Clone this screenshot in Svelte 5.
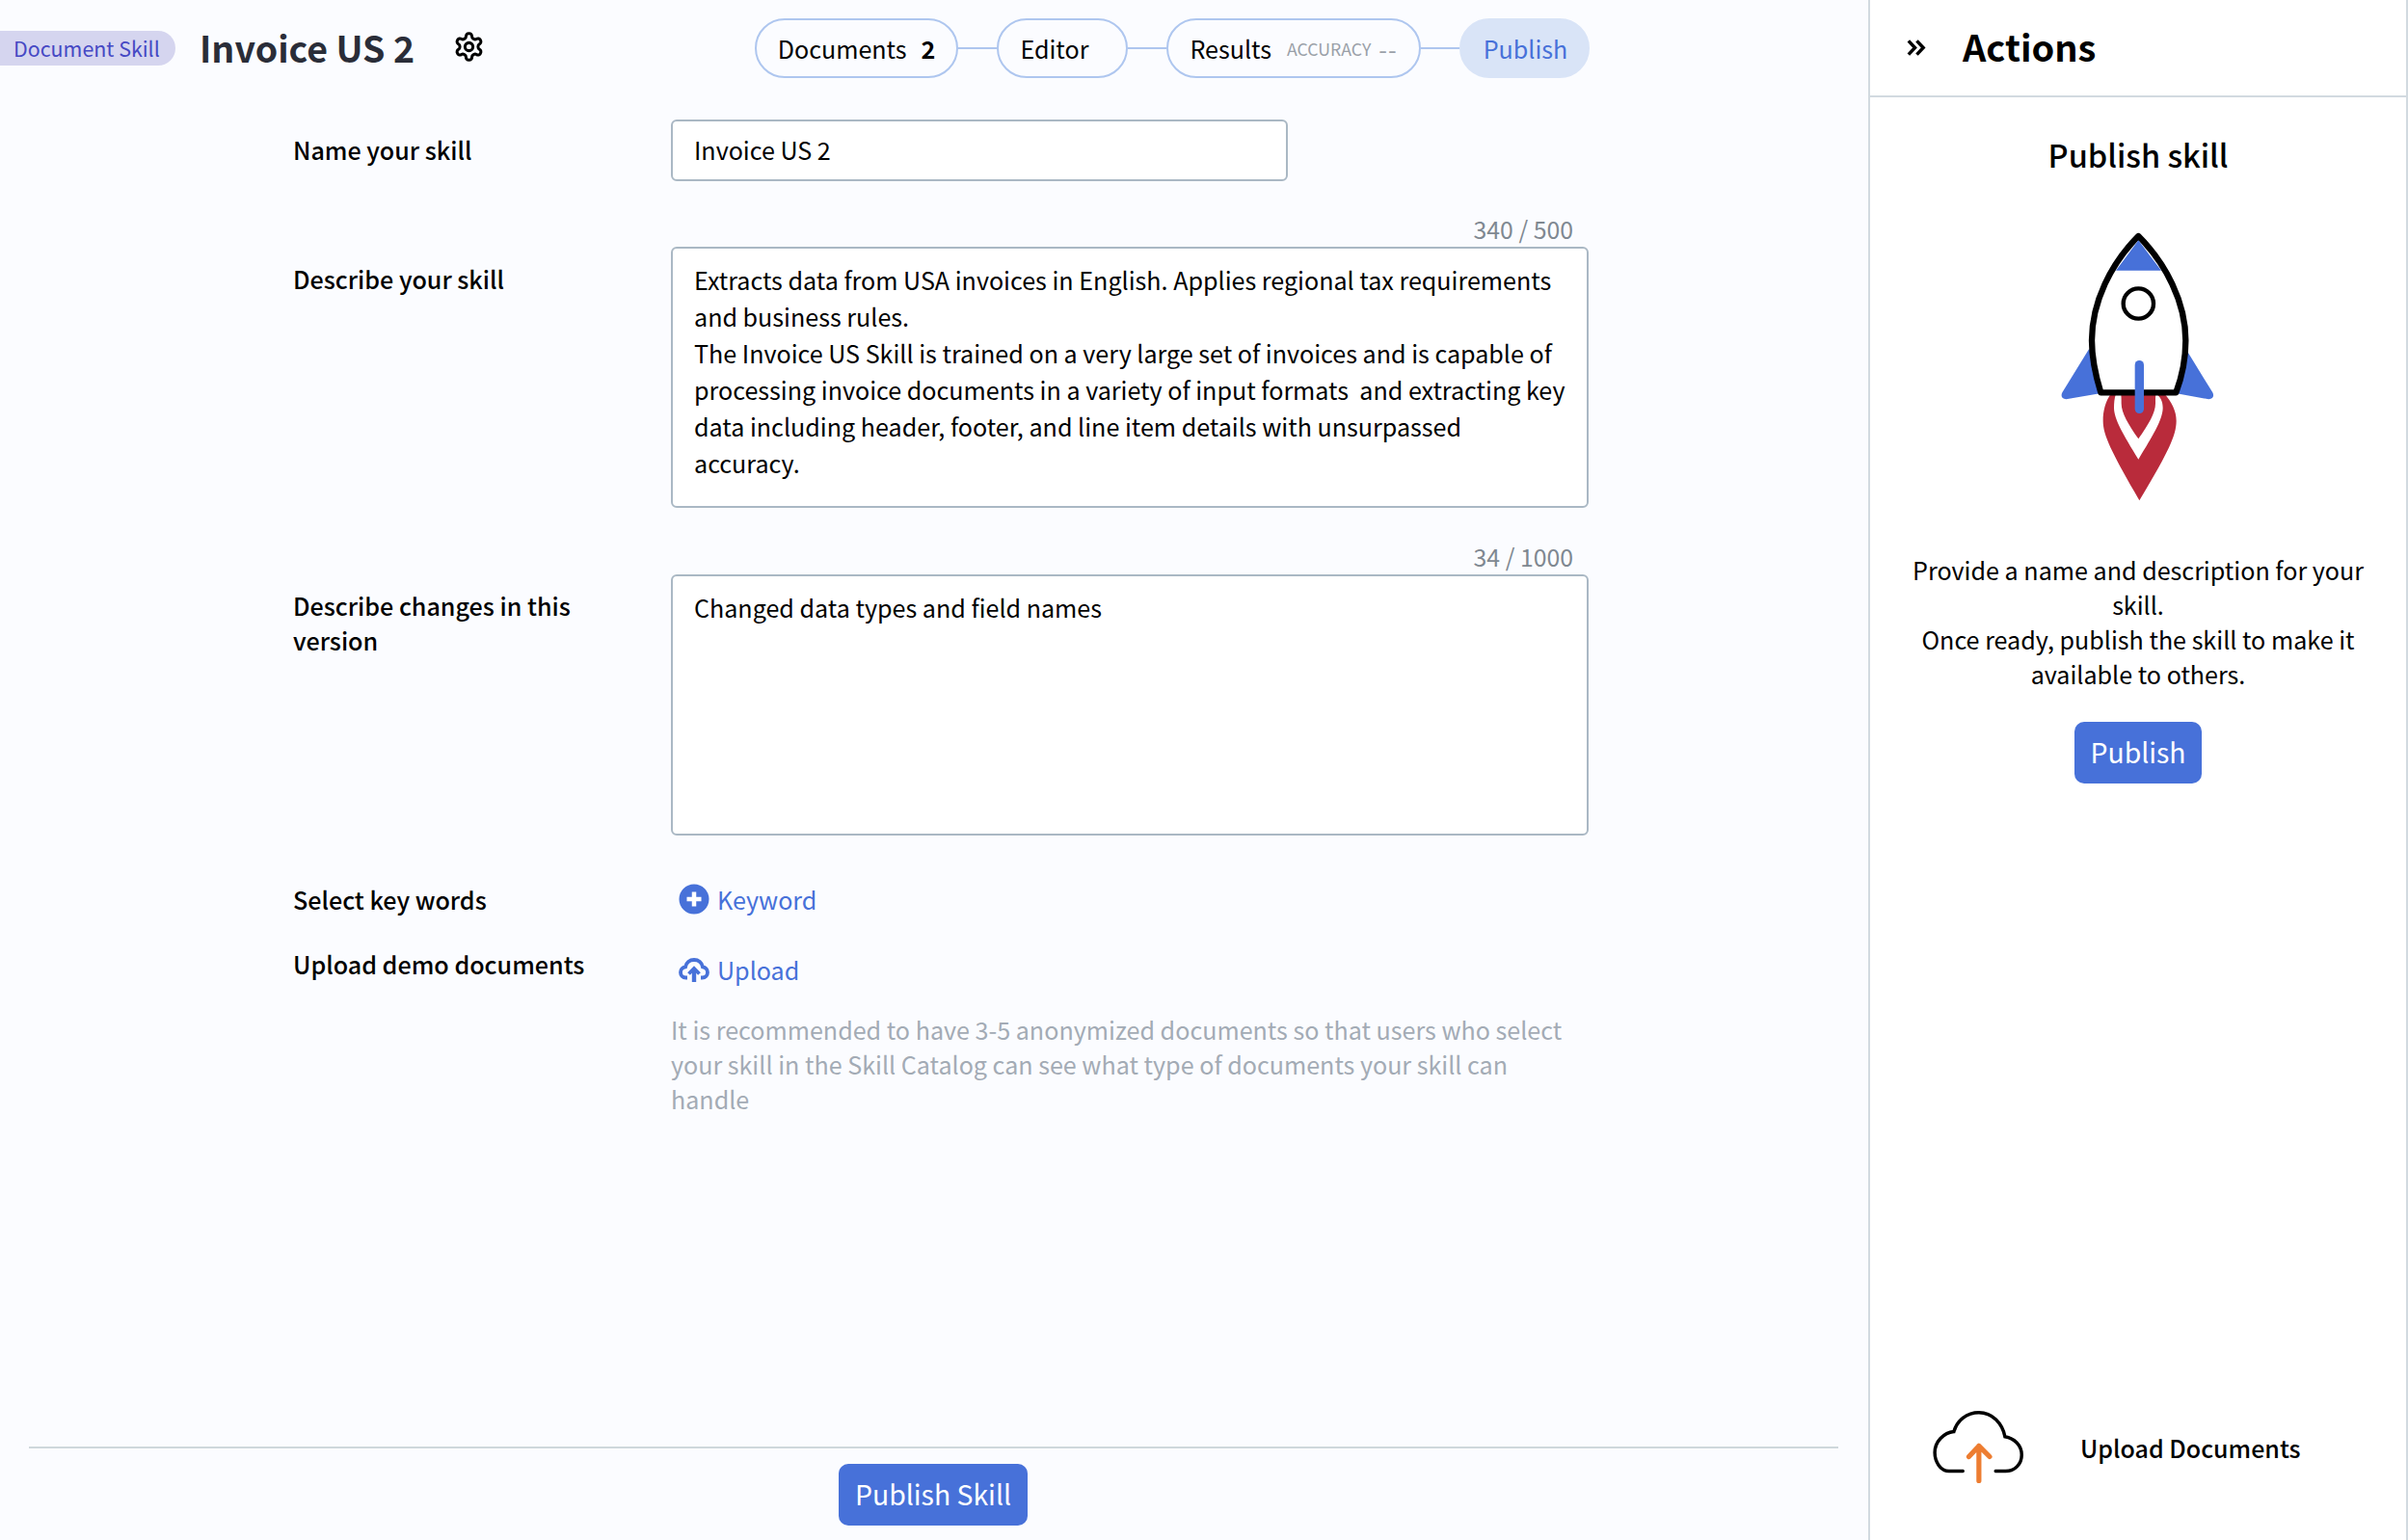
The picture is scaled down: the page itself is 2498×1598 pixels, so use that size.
<script>
  const steps = [
    { name: 'Documents', count: '2' },
    { name: 'Editor', wide: true },
    { name: 'Results', accuracy: true },
    { name: 'Publish', active: true }
  ];
  const description = `Extracts data from USA invoices in English. Applies regional tax requirements and business rules.
The Invoice US Skill is trained on a very large set of invoices and is capable of processing invoice documents in a variety of input formats  and extracting key data including header, footer, and line item details with unsurpassed accuracy.`;
</script>

<div class="app">
  <main class="main">
    <header class="top">
      <span class="badge">Document Skill</span>
      <h1 class="title">Invoice US 2</h1>
      <svg class="gear" viewBox="0 0 24 24" fill="none" stroke="#000" stroke-width="2.200" stroke-linejoin="round">
        <path d="M12.22 2h-.44a2 2 0 0 0-2 2v.18a2 2 0 0 1-1 1.73l-.43.25a2 2 0 0 1-2 0l-.15-.08a2 2 0 0 0-2.73.73l-.22.38a2 2 0 0 0 .73 2.73l.15.1a2 2 0 0 1 1 1.72v.51a2 2 0 0 1-1 1.74l-.15.09a2 2 0 0 0-.73 2.73l.22.38a2 2 0 0 0 2.73.73l.15-.08a2 2 0 0 1 2 0l.43.25a2 2 0 0 1 1 1.73V20a2 2 0 0 0 2 2h.44a2 2 0 0 0 2-2v-.18a2 2 0 0 1 1-1.73l.43-.25a2 2 0 0 1 2 0l.15.08a2 2 0 0 0 2.73-.73l.22-.39a2 2 0 0 0-.73-2.73l-.15-.08a2 2 0 0 1-1-1.74v-.5a2 2 0 0 1 1-1.74l.15-.09a2 2 0 0 0 .73-2.73l-.22-.38a2 2 0 0 0-2.73-.73l-.15.08a2 2 0 0 1-2 0l-.43-.25a2 2 0 0 1-1-1.73V4a2 2 0 0 0-2-2z"/>
        <circle cx="12" cy="12" r="3"/>
      </svg>
      <nav class="steps">
        {#each steps as step, i}
          {#if i > 0}<span class="link"></span>{/if}
          <span class="pill" class:active={step.active} class:wide={step.wide}>
            {step.name}
            {#if step.count}<b class="count">{step.count}</b>{/if}
            {#if step.accuracy}<span class="acc">ACCURACY</span><span class="dash">--</span>{/if}
          </span>
        {/each}
      </nav>
    </header>

    <section class="form">
      <div class="label first">Name your skill</div>
      <div class="value"><div class="field short">Invoice US 2</div></div>

      <div class="label second">Describe your skill</div>
      <div class="value gap">
        <div class="counter">340 / 500</div>
        <div class="field area">{description}</div>
      </div>

      <div class="label third">Describe changes in this version</div>
      <div class="value gap later">
        <div class="counter">34 / 1000</div>
        <div class="field area">Changed data types and field names</div>
      </div>

      <div class="label fourth">Select key words</div>
      <div class="value fourth">
        <span class="action">
          <svg class="ico" viewBox="0 0 32 32"><circle cx="16" cy="16" r="15.5" fill="#4771d9"/><path d="M16 8.5v15M8.5 16h15" stroke="#fff" stroke-width="4.5"/></svg>
          Keyword
        </span>
      </div>

      <div class="label fifth">Upload demo documents</div>
      <div class="value fifth">
        <span class="action up">
          <svg class="ico" viewBox="0 0 32 32" fill="none" stroke="#4771d9" stroke-width="3.8">
            <path d="M9 24.500H7.500C4.200 24.500 2 22 2 19c0-2.800 2-5.200 5-5.600C7.800 9 11.500 6 16 6s8.200 3 9 7.400c3 .4 5 2.800 5 5.600 0 3-2.200 5.500-5.500 5.500H23"/>
            <path d="M16 29V16" stroke-width="4.400"/>
            <path d="M10.500 20.500 16 15l5.500 5.500" stroke-width="3.800"/>
          </svg>
          Upload
        </span>
        <p class="help">It is recommended to have 3-5 anonymized documents so that users who select your skill in the Skill Catalog can see what type of documents your skill can handle</p>
      </div>
    </section>

    <footer class="foot">
      <button class="btn">Publish Skill</button>
    </footer>
  </main>

  <aside class="panel">
    <div class="panel-head">
      <svg class="chev" viewBox="0 0 24 24" fill="none" stroke="#000" stroke-width="3.600">
        <path d="M4 4.500 11 12l-7 7.500M13 4.500 20 12l-7 7.500"/>
      </svg>
      <h2>Actions</h2>
    </div>
    <div class="panel-body">
      <h3>Publish skill</h3>
      <svg class="rocket" viewBox="0 0 840 960">
        <path d="M262 425 178 562q-8 18 12 21l105-18zM568 435l78 127q8 18-12 21l-100-18z" fill="#4771d9"/>
        <path d="M330 565C312 590 305 620 305 650c0 50 35 110 113 248 82-138 115-198 115-248 0-30-15-60-38-85z" fill="#b92b3b"/>
        <path d="M345 566C340 580 339 595 339 610c0 35 30 85 76 160 46-75 76-125 76-160 0-15-3-30-20-44h-2c-1 8-1 20-1 30 0 30-22 65-53 110-31-45-53-80-53-110 0-10 0-20-1-30z" fill="#fff"/>
        <path d="M415 75C330 160 270 280 270 400c0 60 15 120 28 162h234c16-42 30-102 30-162C562 280 500 160 415 75z" fill="#fff" stroke="#000" stroke-width="19" stroke-linejoin="round"/>
        <path d="M415 88 345 182H486z" fill="#4771d9"/>
        <circle cx="415" cy="285" r="47" fill="none" stroke="#000" stroke-width="13"/>
        <path d="M418 476V613" stroke="#4771d9" stroke-width="28" stroke-linecap="round"/>
      </svg>
      <p class="blurb">Provide a name and description for your skill.<br/>Once ready, publish the skill to make it available to others.</p>
      <button class="btn small">Publish</button>
      <div class="upload">
        <svg class="cloud" viewBox="130 110 275 225" fill="none">
          <path d="M222 293H180c-25 0-42-28-42-55 0-33 27-60 57-63 10-35 40-57 75-57 40 0 70 32 78 72 27 5 50 25 50 55 0 27-20 48-48 48h-30" stroke="#000" stroke-width="10" stroke-linecap="round"/>
          <path d="M270 322V218M240 250l30-32 32 32" stroke="#ed7d31" stroke-width="15" stroke-linecap="round" stroke-linejoin="round"/>
        </svg>
        <span>Upload Documents</span>
      </div>
    </div>
  </aside>
</div>

<style>
  :global(body) {
    margin: 0;
    background: #fbfcff;
  }
  .app {
    display: flex;
    width: 2498px;
    height: 1598px;
    overflow: hidden;
    font-family: "Noto Sans CJK SC", "Noto Sans", sans-serif;
    font-size: 25.1px;
    line-height: 36px;
    color: #000;
  }
  .main {
    flex: 1;
    min-width: 0;
    display: flex;
    flex-direction: column;
    background: #fbfcff;
  }
  .top {
    display: flex;
    align-items: center;
    height: 100px;
    flex: none;
  }
  .badge {
    display: flex;
    align-items: center;
    width: 182px;
    box-sizing: border-box;
    height: 36px;
    padding-left: 14px;
    border-radius: 0 18px 18px 0;
    background: #d5d5ef;
    color: #4548c4;
    font-size: 21.400px;
  }
  .title {
    margin: 0 0 3px 25px;
    font-size: 37.500px;
    line-height: 50px;
    font-weight: 700;
    color: #2a2d38;
  }
  .gear {
    width: 33px;
    height: 33px;
    margin: 0 0 3px 40px;
    flex: none;
  }
  .steps {
    display: flex;
    align-items: center;
    margin-left: 279.500px;
  }
  .link {
    width: 40px;
    height: 2px;
    background: #aec6ef;
  }
  .pill {
    display: flex;
    align-items: center;
    box-sizing: border-box;
    height: 62px;
    padding: 0 22px 1px;
    border: 2px solid #aec6ef;
    border-radius: 31px;
    white-space: nowrap;
  }
  .pill.wide {
    padding-right: 39px;
  }
  .pill.active {
    background: #d9e4f7;
    border-color: #d9e4f7;
    color: #4771d9;
    padding: 0 21px 1px 23px;
  }
  .count {
    margin-left: 15px;
    font-weight: 700;
  }
  .acc {
    margin-left: 16px;
    font-size: 17.700px;
    color: #9aa0a8;
  }
  .dash {
    margin-left: 8px;
    color: #9aa0a8;
    font-size: 25px;
    letter-spacing: 1px;
  }
  .form {
    display: grid;
    grid-template-columns: 392px 952px;
    padding: 24px 0 0 304px;
    flex: none;
    align-content: start;
  }
  .label {
    font-weight: 500;
    padding-right: 40px;
  }
  .label.first { margin-top: 13px; }
  .label.second { margin-top: 82.500px; }
  .label.third { margin-top: 83px; }
  .fourth { margin-top: 47.500px; }
  .fifth { margin-top: 31px; }
  .value.gap { margin-top: 34px; }
  .value.gap.later { margin-top: 35px; }
  .counter {
    height: 31px;
    line-height: 31px;
    padding-bottom: 3px;
    text-align: right;
    padding-right: 16px;
    color: #7f8891;
    font-size: 24.800px;
  }
  .field {
    box-sizing: border-box;
    background: #fff;
    border: 2px solid #aab8c4;
    border-radius: 6px;
    padding: 13px 22px;
    line-height: 38.100px;
    white-space: pre-wrap;
  }
  .field.short {
    width: 640px;
    height: 64px;
    padding-top: 10px;
    line-height: 38px;
  }
  .field.area {
    height: 271px;
  }
  .action {
    display: flex;
    align-items: center;
    height: 36px;
    padding-left: 8px;
    gap: 8px;
    color: #4771d9;
  }
  .action.up { margin-top: 6px; }
  .ico {
    width: 32px;
    height: 32px;
    flex: none;
  }
  .help {
    margin: 26px 0 0;
    color: #a3abb5;
  }
  .foot {
    margin: auto 31px 0 30px;
    border-top: 2px solid #cfd8dc;
    height: 97px;
    box-sizing: border-box;
    padding-top: 16px;
    padding-left: 840px;
  }
  .btn {
    display: block;
    box-sizing: border-box;
    width: 196px;
    height: 64px;
    border: none;
    border-radius: 10px;
    background: #4771d9;
    color: #fff;
    font: inherit;
    font-size: 28.400px;
    padding: 0 0 2px;
  }
  .btn.small {
    width: 132px;
    flex: none;
  }
  .panel {
    width: 560px;
    flex: none;
    box-sizing: border-box;
    display: flex;
    flex-direction: column;
    background: #fff;
    border-left: 2px solid #d2dae0;
    border-right: 2px solid #d2dae0;
  }
  .panel-head {
    display: flex;
    align-items: center;
    height: 101px;
    flex: none;
    box-sizing: border-box;
    border-bottom: 2px solid #d2dae0;
    padding-left: 36px;
  }
  .chev {
    width: 23px;
    height: 23px;
    margin-bottom: 1px;
  }
  .panel-head h2 {
    margin: 0 0 3px 37px;
    font-size: 38px;
    line-height: 50px;
    font-weight: 700;
  }
  .panel-body {
    flex: 1;
    display: flex;
    flex-direction: column;
    align-items: center;
  }
  .panel-body h3 {
    margin: 37px 0 0;
    font-size: 32.500px;
    line-height: 44px;
    font-weight: 500;
  }
  .rocket {
    width: 280px;
    height: 320px;
    margin: 38px 0 0 3px;
    flex: none;
  }
  .blurb {
    margin: 33px 0 32px;
    padding: 0 36px;
    text-align: center;
  }
  .upload {
    margin-top: auto;
    align-self: stretch;
    display: flex;
    align-items: center;
    height: 130px;
    margin-bottom: 31px;
    padding-left: 64px;
    font-weight: 500;
    font-size: 25px;
  }
  .cloud {
    width: 96px;
    height: 78px;
    margin-right: 58px;
    flex: none;
  }
</style>
